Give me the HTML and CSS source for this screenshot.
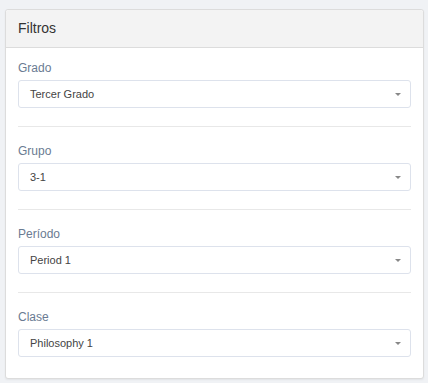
FILE: index.html
```html
<!DOCTYPE html>
<html lang="es">
<head>
    <meta charset="UTF-8">
    <meta name="viewport" content="width=device-width, initial-scale=1.0">
    <title>Filtros</title>
    <link rel="stylesheet" href="styles.css">
</head>
<body>
    <div class="filter-card">
        <div class="filter-header">Filtros</div>

        <div class="filter-body">
            <div class="filter-group">
                <label class="filter-label">Grado</label>
                <div class="filter-select">
                    <span>Tercer Grado</span>
                    <span class="caret"></span>
                </div>
            </div>

            <div class="filter-group">
                <label class="filter-label">Grupo</label>
                <div class="filter-select">
                    <span>3-1</span>
                    <span class="caret"></span>
                </div>
            </div>

            <div class="filter-group">
                <label class="filter-label">Período</label>
                <div class="filter-select">
                    <span>Period 1</span>
                    <span class="caret"></span>
                </div>
            </div>

            <div class="filter-group">
                <label class="filter-label">Clase</label>
                <div class="filter-select">
                    <span>Philosophy 1</span>
                    <span class="caret"></span>
                </div>
            </div>
        </div>
    </div>
</body>
</html>
```

FILE: styles.css
```css
* {
    margin: 0;
    padding: 0;
    box-sizing: border-box;
}

body {
    font-family: 'Liberation Sans', Arial, sans-serif;
    background: #f0f2f5;
    color: #333;
    padding: 9px 4px 4px 5px;
}

.filter-card {
    background: #ffffff;
    border: 1px solid #dcdcdc;
    border-radius: 3px;
    box-shadow: 0 1px 2px rgba(0, 0, 0, 0.06);
}

.filter-header {
    background: #f3f3f3;
    border-bottom: 1px solid #dcdcdc;
    border-radius: 3px 3px 0 0;
    padding: 9px 12px 10px;
    font-size: 14px;
    line-height: 18px;
    color: #333;
}

.filter-body {
    padding: 12px 12px 21px;
}

.filter-group {
    padding-bottom: 18px;
    margin-bottom: 16px;
    border-bottom: 1px solid #e8e8e8;
}

.filter-group:last-child {
    padding-bottom: 0;
    margin-bottom: 0;
    border-bottom: none;
}

.filter-label {
    display: block;
    font-size: 12px;
    line-height: 17px;
    color: #6a7b92;
    margin-bottom: 3px;
}

.filter-select {
    height: 28px;
    border: 1px solid #dde2ec;
    border-radius: 3px;
    padding: 0 9px 0 11px;
    display: flex;
    align-items: center;
    justify-content: space-between;
    font-size: 11px;
    color: #444;
}

.caret {
    width: 0;
    height: 0;
    border-left: 3px solid transparent;
    border-right: 3px solid transparent;
    border-top: 3px solid #888;
}
```
